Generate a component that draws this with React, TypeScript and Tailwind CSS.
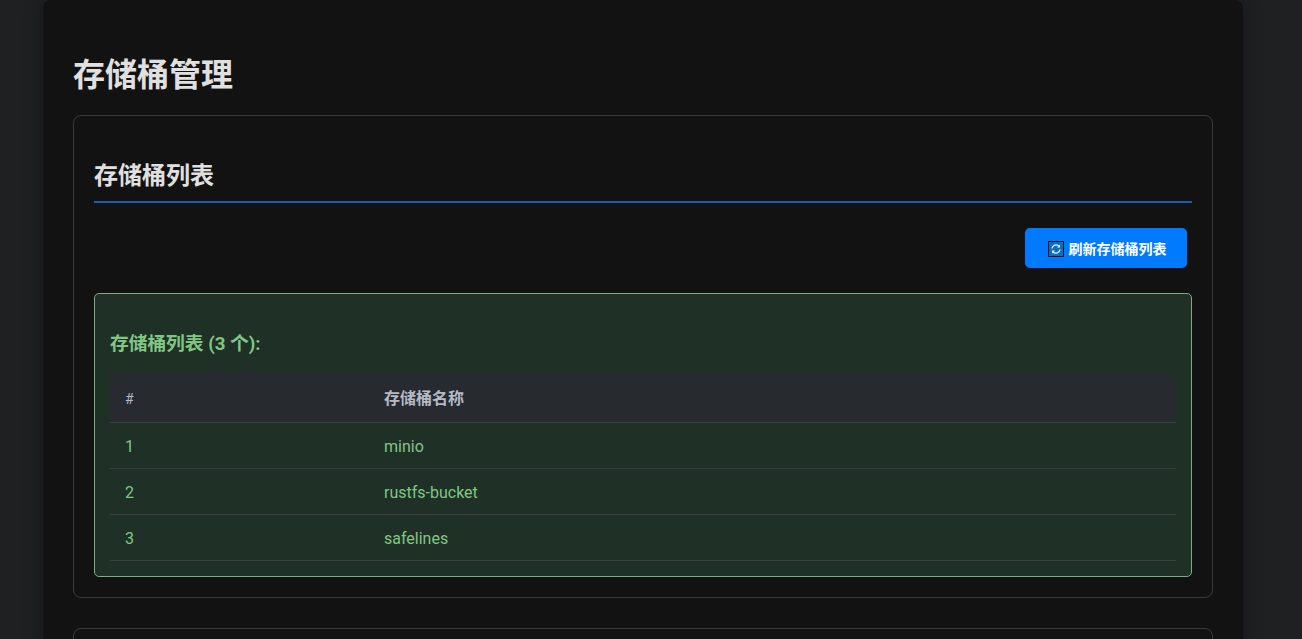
import React from 'react';

const FONT = "font-['Roboto','Noto_Sans_CJK_SC',sans-serif]";

function RefreshEmoji() {
  return (
    <svg width="16" height="16" viewBox="0 0 16 16" className="shrink-0">
      <rect x="0.5" y="0.5" width="15" height="15" fill="#0a6fc2" stroke="#06121c" />
      <path d="M4 7.5a4 4 0 0 1 7-2.2" fill="none" stroke="#e6f4ff" strokeWidth="1.3" />
      <path d="M12 8.5a4 4 0 0 1-7 2.2" fill="none" stroke="#e6f4ff" strokeWidth="1.3" />
      <path d="M12 3.6v3h-3z" fill="#e6f4ff" />
      <path d="M4 12.4v-3h3z" fill="#e6f4ff" />
    </svg>
  );
}

export default function App() {
  const buckets = ['minio', 'rustfs-bucket', 'safelines'];

  return (
    <div className={`h-[639px] overflow-hidden bg-[#1f2022] pr-4 ${FONT}`}>
      <div className="mx-auto w-[1200px] rounded-lg bg-[#121212] px-[30px] pt-[53px] shadow-[0_0_20px_rgba(0,0,0,0.3)]">
        <h1 className="mb-[17px] text-[32px] leading-[45px] font-bold text-[#e0e0e0]">存储桶管理</h1>

        <div className="rounded-lg border border-[#3a3a3a] px-5 pt-[45px] pb-5">
          <h2 className="mb-[25px] border-b-2 border-[#1a5cb0] pb-[9px] text-2xl leading-[31px] font-bold text-[#e0e0e0]">
            存储桶列表
          </h2>

          <div className="mb-[25px] flex justify-end pr-[5px]">
            <button className="flex h-10 w-[162px] items-center justify-center gap-[5px] rounded-[5px] bg-[#007bff] pt-px pl-0.5 text-sm font-bold text-white">
              <RefreshEmoji />
              刷新存储桶列表
            </button>
          </div>

          <div className="rounded-[5px] border border-[#7fa884] bg-[#1f3027] px-[15px] pt-[35px] pb-[15px]">
            <h3 className="mb-[15px] text-[18.72px] leading-[30px] font-bold text-[#81c784]">存储桶列表 (3 个):</h3>
            <table className="w-full border-collapse text-base text-[#81c784]">
              <thead>
                <tr className="h-12 border-b border-[#3a3f42] bg-[#272a2e] text-left text-[#b4bac6]">
                  <th className="w-[259px] pt-0.5 pl-[15px] text-sm font-normal">#</th>
                  <th className="pt-0.5 pl-[15px] text-base font-bold">存储桶名称</th>
                </tr>
              </thead>
              <tbody>
                {buckets.map((name, i) => (
                  <tr key={name} className="h-[46px] border-b border-[#3a3f42]">
                    <td className="pt-1 pl-[15px]">{i + 1}</td>
                    <td className="pt-1 pl-[15px]">{name}</td>
                  </tr>
                ))}
              </tbody>
            </table>
          </div>
        </div>

        <div className="mt-[30px] h-[200px] rounded-lg border border-[#3a3a3a]" />
      </div>
    </div>
  );
}
